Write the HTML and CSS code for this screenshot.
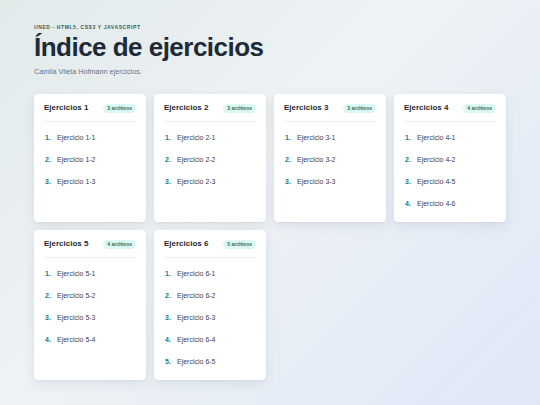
FILE: index.html
```html
<!DOCTYPE html>
<html lang="es">
<head>
<meta charset="utf-8">
<title>Índice de ejercicios</title>
<link rel="stylesheet" href="styles.css">
</head>
<body>
<main class="page">
  <header class="intro">
    <p class="eyebrow">UNED - HTML5, CSS3 Y JAVASCRIPT</p>
    <h1 class="title">Índice de ejercicios</h1>
    <p class="subtitle">Camila Vilela Hofmann ejercicios.</p>
  </header>
  <section class="grid">
    <article class="card">
      <div class="card-head"><h2 class="card-title">Ejercicios 1</h2><span class="badge">3 archivos</span></div>
      <ol class="list">
        <li class="item"><span class="num">1.</span>Ejercicio 1-1</li>
        <li class="item"><span class="num">2.</span>Ejercicio 1-2</li>
        <li class="item"><span class="num">3.</span>Ejercicio 1-3</li>
      </ol>
    </article>
    <article class="card">
      <div class="card-head"><h2 class="card-title">Ejercicios 2</h2><span class="badge">3 archivos</span></div>
      <ol class="list">
        <li class="item"><span class="num">1.</span>Ejercicio 2-1</li>
        <li class="item"><span class="num">2.</span>Ejercicio 2-2</li>
        <li class="item"><span class="num">3.</span>Ejercicio 2-3</li>
      </ol>
    </article>
    <article class="card">
      <div class="card-head"><h2 class="card-title">Ejercicios 3</h2><span class="badge">3 archivos</span></div>
      <ol class="list">
        <li class="item"><span class="num">1.</span>Ejercicio 3-1</li>
        <li class="item"><span class="num">2.</span>Ejercicio 3-2</li>
        <li class="item"><span class="num">3.</span>Ejercicio 3-3</li>
      </ol>
    </article>
    <article class="card">
      <div class="card-head"><h2 class="card-title">Ejercicios 4</h2><span class="badge">4 archivos</span></div>
      <ol class="list">
        <li class="item"><span class="num">1.</span>Ejercicio 4-1</li>
        <li class="item"><span class="num">2.</span>Ejercicio 4-2</li>
        <li class="item"><span class="num">3.</span>Ejercicio 4-5</li>
        <li class="item"><span class="num">4.</span>Ejercicio 4-6</li>
      </ol>
    </article>
    <article class="card">
      <div class="card-head"><h2 class="card-title">Ejercicios 5</h2><span class="badge">4 archivos</span></div>
      <ol class="list">
        <li class="item"><span class="num">1.</span>Ejercicio 5-1</li>
        <li class="item"><span class="num">2.</span>Ejercicio 5-2</li>
        <li class="item"><span class="num">3.</span>Ejercicio 5-3</li>
        <li class="item"><span class="num">4.</span>Ejercicio 5-4</li>
      </ol>
    </article>
    <article class="card">
      <div class="card-head"><h2 class="card-title">Ejercicios 6</h2><span class="badge">5 archivos</span></div>
      <ol class="list">
        <li class="item"><span class="num">1.</span>Ejercicio 6-1</li>
        <li class="item"><span class="num">2.</span>Ejercicio 6-2</li>
        <li class="item"><span class="num">3.</span>Ejercicio 6-3</li>
        <li class="item"><span class="num">4.</span>Ejercicio 6-4</li>
        <li class="item"><span class="num">5.</span>Ejercicio 6-5</li>
      </ol>
    </article>
  </section>
</main>
</body>
</html>
```
FILE: styles.css
```css
* { box-sizing: border-box; }
html, body { margin: 0; padding: 0; }
body {
  width: 540px;
  min-height: 405px;
  font-family: "Liberation Sans", Arial, sans-serif;
  background: linear-gradient(135deg, #e2eaea 0%, #eef2f5 45%, #dfe7f7 100%);
  color: #1f2733;
}
.page {
  padding: 23px 34px 20px;
}
.intro { margin: 0; }
.eyebrow {
  margin: 0;
  font-size: 5px;
  line-height: 8px;
  font-weight: 700;
  letter-spacing: 0.12em;
  color: #2f625c;
}
.title {
  margin: 1px 0 0;
  font-size: 26px;
  line-height: 30px;
  font-weight: 700;
  letter-spacing: -0.02em;
  color: #202a37;
}
.subtitle {
  margin: 4.5px 0 0;
  font-size: 7.25px;
  line-height: 10px;
  color: #6b7380;
}
.grid {
  margin-top: 17.5px;
  display: grid;
  grid-template-columns: repeat(4, 112px);
  gap: 8px;
}
.card {
  background: #ffffff;
  border-radius: 4px;
  padding: 9px 10px 8px;
  box-shadow: 0 4px 12px rgba(30, 41, 70, 0.08), 0 1px 2px rgba(30, 41, 70, 0.05);
}
.card-head {
  display: flex;
  align-items: center;
  justify-content: space-between;
  box-sizing: content-box;
  height: 10px;
  padding-bottom: 8px;
  border-bottom: 1px solid #eceef2;
}
.card-title {
  margin: 0;
  font-size: 8px;
  line-height: 10px;
  font-weight: 700;
  color: #232b36;
}
.badge {
  display: inline-block;
  background: #dcf6f1;
  color: #2b6c63;
  font-size: 5px;
  line-height: 9px;
  padding: 0 4px;
  border-radius: 5px;
  font-weight: 700;
}
.list {
  list-style: none;
  margin: 4px 0 0;
  padding: 0;
}
.item {
  display: flex;
  align-items: center;
  height: 22px;
  padding-left: 1px;
  font-size: 7px;
  color: #3a4250;
}
.num {
  width: 12px;
  font-weight: 700;
  color: #2b7a70;
}
```
